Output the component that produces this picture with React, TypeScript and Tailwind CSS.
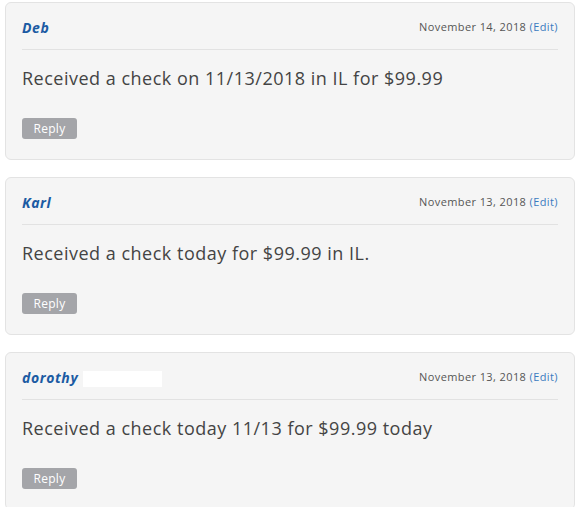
import React from 'react';

type Comment = {
  name: string;
  date: string;
  body: string;
  redacted?: boolean;
};

const comments: Comment[] = [
  { name: 'Deb', date: 'November 14, 2018', body: 'Received a check on 11/13/2018 in IL for $99.99' },
  { name: 'Karl', date: 'November 13, 2018', body: 'Received a check today for $99.99 in IL.' },
  { name: 'dorothy', date: 'November 13, 2018', body: 'Received a check today 11/13 for $99.99 today', redacted: true },
];

const CommentCard = ({ comment }: { comment: Comment }) => (
  <div className="rounded-[6px] border border-[#e3e3e3] bg-[#f5f5f5] px-[16px] pt-[14px] pb-[20px]">
    <div className="mb-[14px] box-content flex h-[20px] items-center justify-between border-b border-[#e2e2e2] pb-[12px]">
      <div className="flex items-center">
        <span className="text-[14px] font-bold italic tracking-[0.6px] text-[#1b5ba3]">{comment.name}</span>
        {comment.redacted && <span className="ml-[5px] mt-[3px] h-[16px] w-[79px] bg-white" />}
      </div>
      <span className="text-[11px] tracking-[0.4px] text-[#555]">
        {comment.date} <span className="text-[#3a7bc0]">(Edit)</span>
      </span>
    </div>
    <p className="text-[18px] leading-[28px] tracking-[0.5px] text-[#444]">{comment.body}</p>
    <button className="mt-[26px] h-[21px] w-[55px] rounded-[3px] bg-[#a4a5a9] text-[12px] tracking-[0.3px] text-white">
      Reply
    </button>
  </div>
);

export default function App() {
  return (
    <div className="h-[507px] w-[580px] overflow-hidden bg-white px-[5px] pt-[2px] font-['Open_Sans',sans-serif]">
      <div className="flex flex-col gap-[17px]">
        {comments.map((c) => (
          <CommentCard key={c.name} comment={c} />
        ))}
      </div>
    </div>
  );
}
